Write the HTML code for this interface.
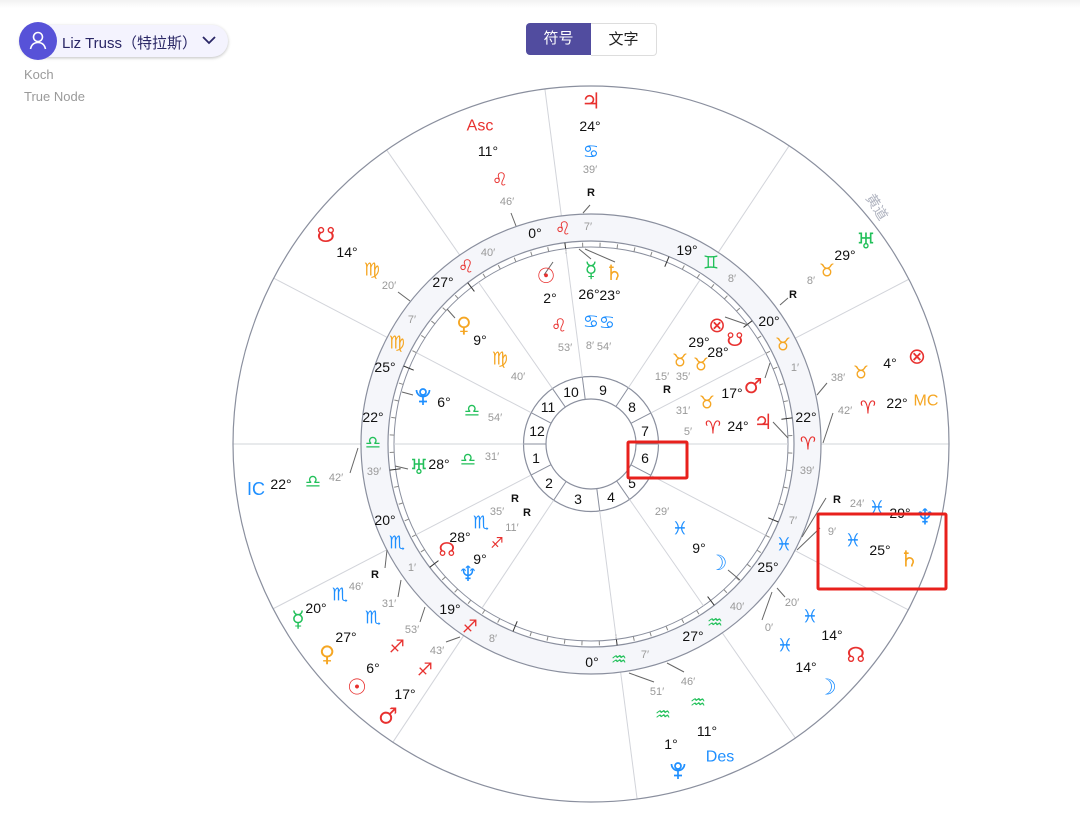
<!DOCTYPE html>
<html><head><meta charset="utf-8"><style>
body{margin:0;width:1080px;height:827px;background:#fff;font-family:"Liberation Sans","Noto Sans CJK SC",sans-serif;overflow:hidden;position:relative}
.top{position:absolute;left:0;top:0;width:1080px;height:8px;background:linear-gradient(#f2f2f2,#fff)}
.pill{position:absolute;left:20px;top:25px;width:208px;height:32px;border-radius:16px;background:#f4f3fe;box-shadow:0 1px 3px rgba(0,0,0,.25)}
.av{position:absolute;left:19px;top:22px;width:38px;height:38px;border-radius:50%;background:#5752d8}
.name{position:absolute;left:62px;top:32px;font-size:15px;color:#2a2766}
.sub{position:absolute;left:24px;font-size:13px;color:#9a9a9a}
.tg{position:absolute;top:23px;height:32px;width:65px;line-height:32px;text-align:center;font-size:15px}
svg text{font-family:"Liberation Sans","DejaVu Sans",sans-serif;text-anchor:middle;dominant-baseline:central}
.d{font-size:14px;fill:#111}
.m{font-size:11px;fill:#999}
.s{font-family:"DejaVu Sans",sans-serif !important;font-size:18px}
.r{font-size:11px;font-weight:bold;fill:#111}
.F{fill:#e8312f}.E{fill:#f5a623}.A{fill:#22c05a}.W{fill:#1e8fff}
.pl{fill:none;stroke:#1e8fff;stroke-width:1.7}
</style></head><body>
<div class="top"></div>
<div class="pill"></div>
<div class="av"><svg width="38" height="38" viewBox="0 0 38 38"><circle cx="19" cy="15" r="4.5" fill="none" stroke="#fff" stroke-width="1.6"/><path d="M11.5 27c1-4.5 4-6.5 7.5-6.5s6.5 2 7.5 6.5" fill="none" stroke="#fff" stroke-width="1.6"/></svg></div>
<div class="name">Liz Truss（特拉斯）</div>
<svg style="position:absolute;left:201px;top:35px" width="16" height="12"><path d="M2 2l6 6 6-6" fill="none" stroke="#2a2766" stroke-width="1.8"/></svg>
<div class="sub" style="top:67px">Koch</div>
<div class="sub" style="top:89px">True Node</div>
<div class="tg" style="left:526px;background:#514c9f;color:#fff;border-radius:4px 0 0 4px">符号</div>
<div class="tg" style="left:591px;background:#fff;color:#222;border:1px solid #ddd;border-left:none;height:31px;line-height:31px;border-radius:0 4px 4px 0">文字</div>

<svg id="c" width="1080" height="827" style="position:absolute;left:0;top:0">
<defs><g id="pluto"><circle cx="0" cy="-4" r="3"/><path d="M-6.5 -6a6.5 6.5 0 0 0 13 0"/><path d="M0 0.5V9M-4 5.5H4"/></g></defs>
<g id="lines" stroke="#d2d4da" stroke-width="1"></g>
<circle cx="591" cy="444" r="358" fill="none" stroke="#8a8f9e" stroke-width="1.2"/>
<circle cx="591" cy="444" r="216.5" fill="none" stroke="#f5f6fa" stroke-width="27"/>
<circle cx="591" cy="444" r="230" fill="none" stroke="#8a8f9e" stroke-width="1.2"/>
<circle cx="591" cy="444" r="203" fill="none" stroke="#8a8f9e" stroke-width="1.2"/>
<circle cx="591" cy="444" r="197" fill="none" stroke="#8a8f9e" stroke-width="1"/>
<circle cx="591" cy="444" r="67.5" fill="#fff" stroke="#8a8f9e" stroke-width="1.2"/>
<circle cx="591" cy="444" r="45" fill="#fff" stroke="#8a8f9e" stroke-width="1.2"/>
<g id="ticks" stroke="#555" stroke-width="1"></g>
<g id="ilines" stroke="#d2d4da" stroke-width="1"></g>
<g stroke="#666" stroke-width="1">
<line x1="590" y1="205" x2="583" y2="213"/><line x1="511" y1="213" x2="516" y2="226"/><line x1="398" y1="292" x2="410" y2="301"/>
<line x1="553" y1="262" x2="544" y2="275"/><line x1="579" y1="249" x2="591" y2="259"/><line x1="585" y1="249" x2="615" y2="262"/>
<line x1="447" y1="309" x2="455" y2="318"/><line x1="402" y1="392" x2="413" y2="395"/><line x1="395" y1="466" x2="408" y2="469"/>
<line x1="725" y1="317" x2="748" y2="325"/><line x1="765" y1="378" x2="770" y2="363"/><line x1="773" y1="422" x2="788" y2="438"/>
<line x1="350" y1="473" x2="358" y2="448"/><line x1="387" y1="550" x2="385" y2="568"/><line x1="401" y1="580" x2="398" y2="597"/>
<line x1="425" y1="607" x2="420" y2="622"/><line x1="460" y1="637" x2="446" y2="642"/>
<line x1="629" y1="673" x2="654" y2="682"/><line x1="667" y1="663" x2="684" y2="672"/><line x1="762" y1="620" x2="772" y2="592"/>
<line x1="777" y1="588" x2="785" y2="597"/><line x1="797" y1="550" x2="820" y2="528"/><line x1="802" y1="537" x2="826" y2="498"/>
<line x1="827" y1="383" x2="817" y2="395"/><line x1="833" y1="413" x2="823" y2="443"/><line x1="780" y1="305" x2="788" y2="298"/>
<line x1="728" y1="570" x2="740" y2="580"/>
</g>
<g class="d">
<text x="571" y="392">10</text><text x="603" y="390">9</text><text x="632" y="407">8</text><text x="645" y="431">7</text>
<text x="645" y="458">6</text><text x="632" y="483">5</text><text x="611" y="497">4</text><text x="578" y="499">3</text>
<text x="549" y="483">2</text><text x="536" y="458">1</text><text x="537" y="431">12</text><text x="548" y="407">11</text>
</g>
<g>
<text class="d" x="535" y="233">0°</text><text class="s F" x="563" y="229">♌</text><text class="m" x="588" y="227">7′</text>
<text class="m" x="488" y="253">40′</text><text class="s F" x="466" y="267">♌</text><text class="d" x="443" y="282">27°</text>
<text class="m" x="412" y="320">7′</text><text class="s E" x="397" y="343">♍</text><text class="d" x="385" y="367">25°</text>
<text class="d" x="373" y="417">22°</text><text class="s A" x="373" y="443">♎</text><text class="m" x="374" y="472">39′</text>
<text class="d" x="385" y="520">20°</text><text class="s W" x="397" y="543">♏</text><text class="m" x="412" y="568">1′</text>
<text class="d" x="450" y="609">19°</text><text class="s F" x="470" y="627">♐</text><text class="m" x="493" y="639">8′</text>
<text class="d" x="592" y="662">0°</text><text class="s A" x="619" y="660">♒</text><text class="m" x="645" y="655">7′</text>
<text class="d" x="693" y="636">27°</text><text class="s A" x="715" y="623">♒</text><text class="m" x="737" y="607">40′</text>
<text class="d" x="768" y="567">25°</text><text class="s W" x="784" y="545">♓</text><text class="m" x="793" y="521">7′</text>
<text class="m" x="807" y="471">39′</text><text class="s F" x="808" y="444">♈</text><text class="d" x="806" y="417">22°</text>
<text class="m" x="795" y="368">1′</text><text class="s E" x="783" y="345">♉</text><text class="d" x="769" y="321">20°</text>
<text class="d" x="687" y="250">19°</text><text class="s A" x="711" y="263">♊</text><text class="m" x="732" y="279">8′</text>
</g>
<g>
<text class="s F" x="546" y="276" style="font-size:21px">☉</text><text class="d" x="550" y="298">2°</text><text class="s F" x="559" y="326">♌</text><text class="m" x="565" y="348">53′</text>
<text class="s A" x="591" y="270" style="font-size:21px">☿</text><text class="s E" x="614" y="273" style="font-size:21px">♄</text><text class="d" x="589" y="294">26°</text><text class="d" x="610" y="295">23°</text>
<text class="s W" x="591" y="322">♋</text><text class="s W" x="607" y="323">♋</text><text class="m" x="590" y="346">8′</text><text class="m" x="604" y="347">54′</text>
<text class="s E" x="464" y="325" style="font-size:21px">♀</text><text class="d" x="480" y="340">9°</text><text class="s E" x="500" y="359">♍</text><text class="m" x="518" y="377">40′</text>
<use href="#pluto" x="423" y="396" class="pl"/><text class="d" x="444" y="402">6°</text><text class="s A" x="472" y="411">♎</text><text class="m" x="495" y="418">54′</text>
<text class="s A" x="419" y="467" style="font-size:21px">♅</text><text class="d" x="439" y="464">28°</text><text class="s A" x="468" y="460">♎</text><text class="m" x="492" y="457">31′</text>
<text class="s F" x="717" y="325" style="font-size:21px">⊗</text><text class="d" x="699" y="342">29°</text><text class="s F" x="735" y="340" style="font-size:19px">☋</text><text class="d" x="718" y="352">28°</text>
<text class="s E" x="680" y="361">♉</text><text class="s E" x="701" y="365">♉</text><text class="m" x="662" y="377">15′</text><text class="m" x="683" y="377">35′</text><text class="r" x="667" y="390">R</text>
<text class="s F" x="753" y="386" style="font-size:21px">♂</text><text class="d" x="732" y="393">17°</text><text class="s E" x="707" y="403">♉</text><text class="m" x="683" y="411">31′</text>
<text class="s F" x="763" y="422" style="font-size:21px">♃</text><text class="d" x="738" y="426">24°</text><text class="s F" x="713" y="428">♈</text><text class="m" x="688" y="432">5′</text>
<text class="r" x="515" y="499">R</text><text class="r" x="527" y="513">R</text><text class="m" x="497" y="512">35′</text><text class="s W" x="481" y="523">♏</text><text class="m" x="512" y="528">11′</text>
<text class="d" x="460" y="537">28°</text><text class="s F" x="447" y="550" style="font-size:19px">☊</text><text class="s F" x="497" y="543" style="font-size:15px">♐</text><text class="d" x="480" y="559">9°</text><text class="s W" x="468" y="574" style="font-size:21px">♆</text>
<text class="m" x="662" y="512">29′</text><text class="s W" x="680" y="529">♓</text><text class="d" x="699" y="548">9°</text><text class="s W" x="718" y="563" style="font-size:21px">☽</text>
</g>
<g>
<text class="s F" x="591" y="102" style="font-size:22px">♃</text><text class="d" x="590" y="126">24°</text><text class="s W" x="591" y="152">♋</text><text class="m" x="590" y="170">39′</text><text class="r" x="591" y="193">R</text>
<text x="480" y="126" style="font-size:16px;fill:#e8312f;font-family:'Liberation Sans Narrow','Liberation Sans',sans-serif">Asc</text><text class="d" x="488" y="151">11°</text><text class="s F" x="500" y="180">♌</text><text class="m" x="507" y="202">46′</text>
<text class="s F" x="326" y="235" style="font-size:21px">☋</text><text class="d" x="347" y="252">14°</text><text class="s E" x="372" y="270">♍</text><text class="m" x="389" y="286">20′</text>
<text x="256" y="489" style="font-size:18px;fill:#1e8fff">IC</text><text class="d" x="281" y="484">22°</text><text class="s A" x="313" y="482">♎</text><text class="m" x="336" y="478">42′</text>
<text class="r" x="375" y="575">R</text><text class="m" x="356" y="587">46′</text><text class="s W" x="340" y="595">♏</text><text class="d" x="316" y="608">20°</text><text class="s A" x="298" y="620" style="font-size:22px">☿</text>
<text class="m" x="389" y="604">31′</text><text class="s W" x="373" y="618">♏</text><text class="d" x="346" y="637">27°</text><text class="s E" x="327" y="655" style="font-size:22px">♀</text>
<text class="m" x="412" y="630">53′</text><text class="s F" x="397" y="647">♐</text><text class="d" x="373" y="668">6°</text><text class="s F" x="357" y="688" style="font-size:22px">☉</text>
<text class="m" x="437" y="651">43′</text><text class="s F" x="425" y="670">♐</text><text class="d" x="405" y="694">17°</text><text class="s F" x="388" y="717" style="font-size:22px">♂</text>
<text class="r" x="837" y="500">R</text><text class="m" x="857" y="504">24′</text><text class="s W" x="877" y="508">♓</text><text class="d" x="900" y="513">29°</text><text class="s W" x="925" y="518" style="font-size:22px">♆</text>
<text class="m" x="832" y="532">9′</text><text class="s W" x="853" y="541">♓</text><text class="d" x="880" y="550">25°</text><text class="s E" x="909" y="560" style="font-size:22px">♄</text>
<text class="m" x="792" y="603">20′</text><text class="s W" x="810" y="617">♓</text><text class="d" x="832" y="635">14°</text><text class="s F" x="856" y="655" style="font-size:21px">☊</text>
<text class="m" x="769" y="628">0′</text><text class="s W" x="785" y="646">♓</text><text class="d" x="806" y="667">14°</text><text class="s W" x="827" y="688" style="font-size:22px">☽</text>
<text class="m" x="657" y="692">51′</text><text class="s A" x="663" y="715">♒</text><text class="d" x="671" y="744">1°</text><use href="#pluto" x="678" y="770" class="pl"/>
<text class="m" x="688" y="682">46′</text><text class="s A" x="698" y="703">♒</text><text class="d" x="707" y="731">11°</text><text x="720" y="757" style="font-size:16px;fill:#1e8fff;font-family:'Liberation Sans Narrow','Liberation Sans',sans-serif">Des</text>
<text class="s A" x="866" y="242" style="font-size:22px">♅</text><text class="d" x="845" y="255">29°</text><text class="s E" x="827" y="271">♉</text><text class="m" x="811" y="281">8′</text><text class="r" x="793" y="295">R</text>
<text class="s F" x="917" y="357" style="font-size:22px">⊗</text><text class="d" x="890" y="363">4°</text><text class="s E" x="861" y="373">♉</text><text class="m" x="838" y="378">38′</text>
<text x="926" y="401" style="font-size:16px;fill:#f5a623;font-family:'Liberation Sans Narrow','Liberation Sans',sans-serif">MC</text><text class="d" x="897" y="403">22°</text><text class="s F" x="868" y="408">♈</text><text class="m" x="845" y="411">42′</text>
<text x="877" y="207" transform="rotate(58 877 207)" style="font-size:14px;fill:#b0b4c0;font-family:'Noto Sans CJK SC',sans-serif">黄道</text>
</g>
<rect x="628" y="442" width="59" height="36" fill="none" stroke="#e8201c" stroke-width="3" rx="1"/>
<rect x="818" y="514" width="128" height="75" fill="none" stroke="#e8201c" stroke-width="3" rx="1"/>
</svg>
<script>
var cx=591,cy=444,ns="http://www.w3.org/2000/svg";
function L(g,a,r1,r2,extra){var t=a*Math.PI/180,e=document.createElementNS(ns,"line");
e.setAttribute("x1",cx+r1*Math.cos(t));e.setAttribute("y1",cy-r1*Math.sin(t));
e.setAttribute("x2",cx+r2*Math.cos(t));e.setAttribute("y2",cy-r2*Math.sin(t));
if(extra)e.setAttribute("stroke",extra);document.getElementById(g).appendChild(e);}
var cusps=[0,27.4,56.4,97.4,124.8,152.4,180,207.4,236.4,277.4,304.8,332.4];
cusps.forEach(function(a){L("lines",a,230,358);L("ilines",a,67.5,197);L("ilines",a,45,67.5,"#8a8f9e");});
for(var i=0;i<72;i++){var a=7.4+i*5;if(i%6==0)L("ticks",a,192,203,"#333");else L("ticks",a,197,201.5,"#888");}
</script>
</body></html>
